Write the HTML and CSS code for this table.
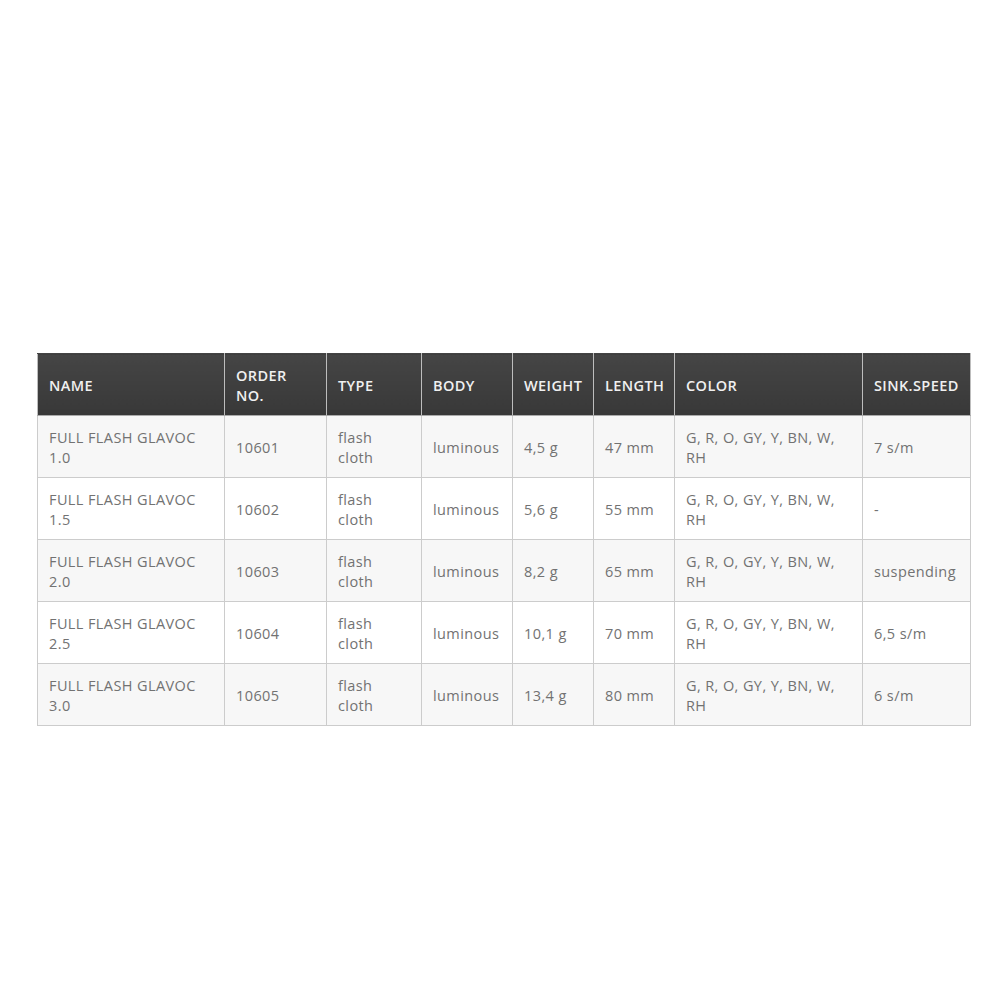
FILE: index.html
```html
<!DOCTYPE html>
<html>
<head>
<meta charset="utf-8">
<link rel="stylesheet" href="styles.css">
</head>
<body>
<div class="page">
<table class="spec">
<colgroup>
<col class="c1"><col class="c2"><col class="c3"><col class="c4"><col class="c5"><col class="c6"><col class="c7"><col class="c8">
</colgroup>
<thead>
<tr><th>NAME</th><th>ORDER NO.</th><th>TYPE</th><th>BODY</th><th>WEIGHT</th><th>LENGTH</th><th>COLOR</th><th>SINK.SPEED</th></tr>
</thead>
<tbody>
<tr><td>FULL FLASH GLAVOC 1.0</td><td>10601</td><td>flash cloth</td><td>luminous</td><td>4,5 g</td><td>47 mm</td><td>G, R, O, GY, Y, BN, W, RH</td><td>7 s/m</td></tr>
<tr><td>FULL FLASH GLAVOC 1.5</td><td>10602</td><td>flash cloth</td><td>luminous</td><td>5,6 g</td><td>55 mm</td><td>G, R, O, GY, Y, BN, W, RH</td><td>-</td></tr>
<tr><td>FULL FLASH GLAVOC 2.0</td><td>10603</td><td>flash cloth</td><td>luminous</td><td>8,2 g</td><td>65 mm</td><td>G, R, O, GY, Y, BN, W, RH</td><td>suspending</td></tr>
<tr><td>FULL FLASH GLAVOC 2.5</td><td>10604</td><td>flash cloth</td><td>luminous</td><td>10,1 g</td><td>70 mm</td><td>G, R, O, GY, Y, BN, W, RH</td><td>6,5 s/m</td></tr>
<tr><td>FULL FLASH GLAVOC 3.0</td><td>10605</td><td>flash cloth</td><td>luminous</td><td>13,4 g</td><td>80 mm</td><td>G, R, O, GY, Y, BN, W, RH</td><td>6 s/m</td></tr>
</tbody>
</table>
</div>
</body>
</html>
```
FILE: styles.css
```css
html, body {
  margin: 0;
  padding: 0;
  background: #ffffff;
}
.page {
  padding: 353px 0 0 37px;
}
.spec {
  border-collapse: collapse;
  table-layout: fixed;
  width: 933px;
  font-family: "Open Sans", "DejaVu Sans", sans-serif;
  font-size: 14.5px;
  line-height: 20px;
  letter-spacing: 0.4px;
}
.c1 { width: 187px; }
.c2 { width: 102px; }
.c3 { width: 95px; }
.c4 { width: 91px; }
.c5 { width: 81px; }
.c6 { width: 81px; }
.c7 { width: 188px; }
.c8 { width: 108px; }
.spec th {
  height: 62px;
  box-sizing: border-box;
  padding: 2px 10px 0 11px;
  text-align: left;
  vertical-align: middle;
  font-weight: 600;
  color: #f0f0f0;
  background: linear-gradient(#454545, #383838);
  border: 1px solid #bdbdbd;
  border-top-color: #444;
  border-bottom-color: #aaa;
}
.spec td {
  height: 62px;
  box-sizing: border-box;
  padding: 2px 10px 0 11px;
  vertical-align: middle;
  color: #727272;
  border: 1px solid #cccccc;
}
.spec tbody tr:nth-child(odd) td {
  background: #f7f7f7;
}
.spec tbody tr:nth-child(even) td {
  background: #ffffff;
}
```
